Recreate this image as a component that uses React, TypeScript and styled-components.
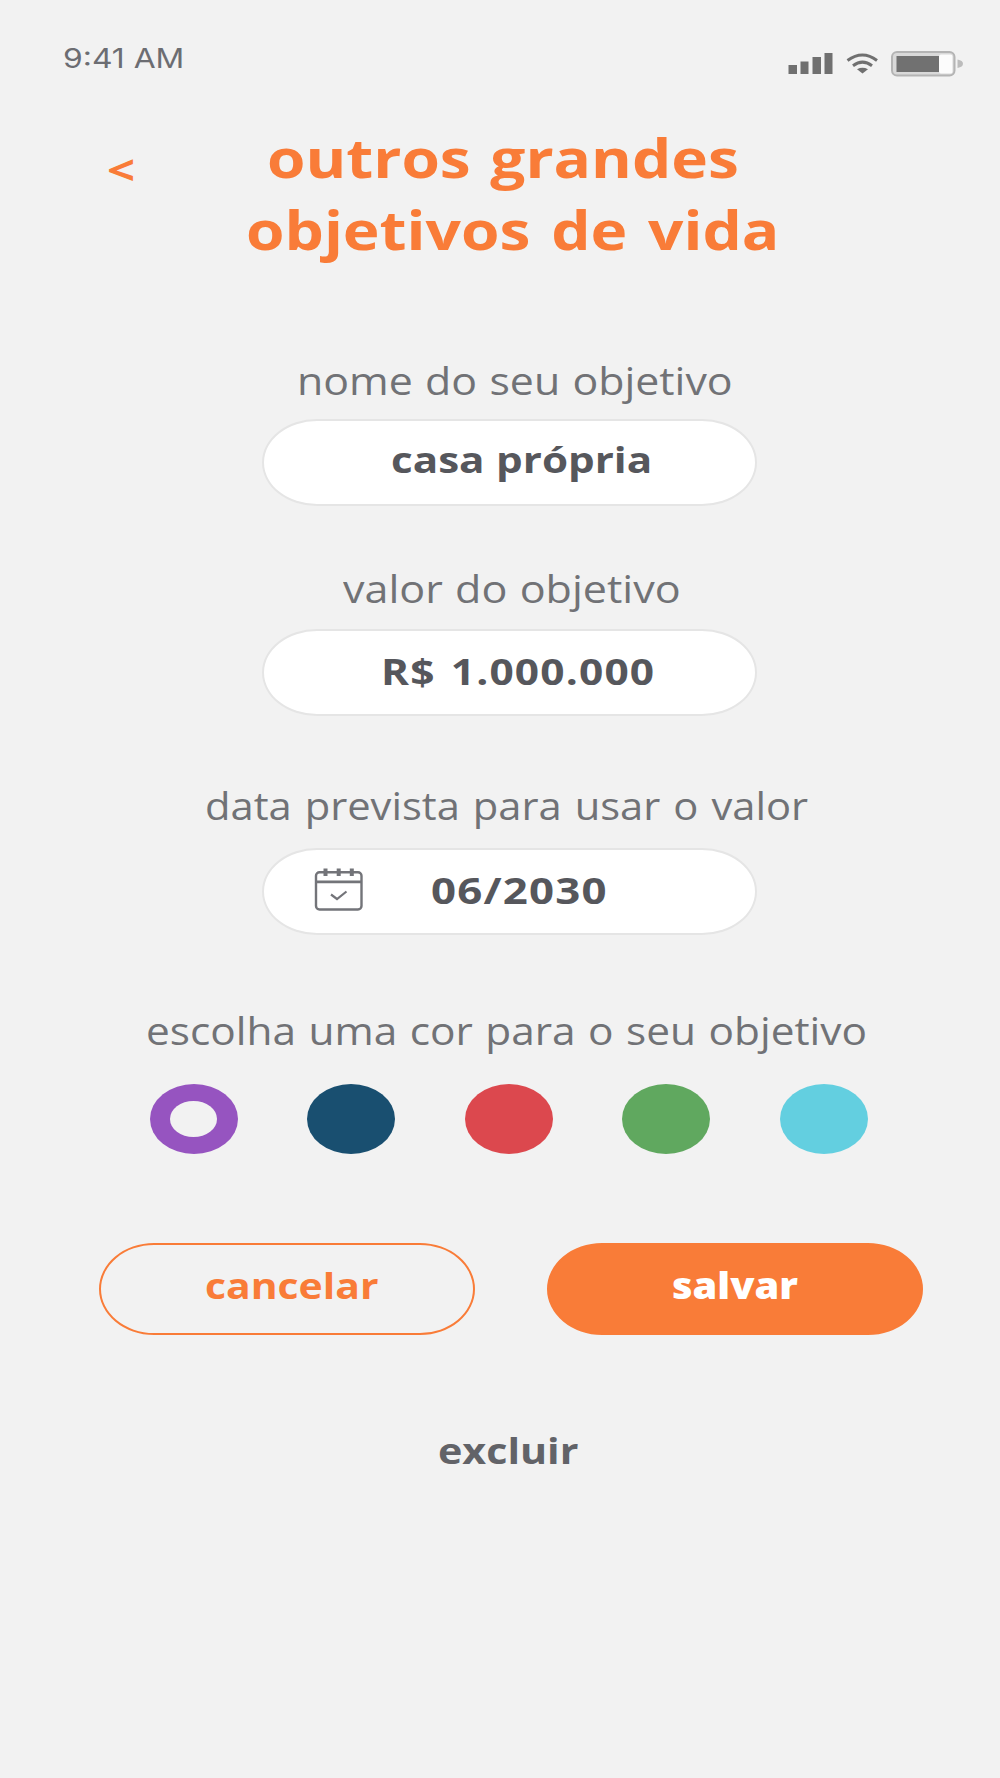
import React from "react";
import styled, { createGlobalStyle } from "styled-components";

const colors = {
  page: "#f2f2f2",
  orange: "#f97c38",
  label: "#717276",
  value: "#56575c",
};

const GlobalStyle = createGlobalStyle`
  * { box-sizing: border-box; }
  body { margin: 0; background: ${colors.page}; }
  button { padding: 0; margin: 0; background: none; border: 0; font: inherit; cursor: pointer; text-align: left; }
`;

const Screen = styled.main`
  width: 1000px;
  height: 1778px;
  overflow: hidden;
  display: flex;
  flex-direction: column;
  background: ${colors.page};
  font-family: "Open Sans", "Noto Sans", sans-serif;
`;

const StatusBar = styled.div`
  height: 121px;
  flex: none;
  display: flex;
  justify-content: space-between;
  padding: 42px 34px 0 63px;
`;

const Wide = styled.span<{ $scale: number; $letter?: number; $word?: number }>`
  display: inline-block;
  white-space: nowrap;
  letter-spacing: ${(p) => p.$letter ?? 0}px;
  word-spacing: ${(p) => p.$word ?? 0}px;
  transform: scaleX(${(p) => p.$scale});
  transform-origin: left center;
`;

const Clock = styled.div`
  font-family: Inter, sans-serif;
  font-size: 26.5px;
  line-height: 32px;
  color: #6c6d72;
`;

const Header = styled.header`
  height: 144px;
  flex: none;
  display: flex;
`;

const Back = styled.button`
  width: 138px;
  height: 96px;
  padding: 0 0 0 107px;
  && {
    font-size: 41px;
    font-weight: 700;
    line-height: 96px;
  }
  color: ${colors.orange};
`;

const Title = styled.h1`
  margin: 0;
  font-size: 54px;
  font-weight: 700;
  line-height: 72px;
  color: ${colors.orange};
`;

const TitleLine = styled.div<{ $indent: number }>`
  padding-left: ${(p) => p.$indent}px;
`;

const Field = styled.section<{ $top: number; $gap: number }>`
  margin-top: ${(p) => p.$top}px;
  display: flex;
  flex-direction: column;
  gap: ${(p) => p.$gap}px;
`;

const Label = styled.div<{ $left: number }>`
  height: 50px;
  padding-left: ${(p) => p.$left}px;
  font-size: 37.5px;
  line-height: 50px;
  color: ${colors.label};
`;

const Pill = styled.div<{ $text: number; $down: number }>`
  width: 495px;
  height: 87px;
  margin-left: 262px;
  padding: ${(p) => p.$down}px 0 0 ${(p) => p.$text}px;
  display: flex;
  border: 2px solid #e5e5e5;
  border-radius: 55px / 43.5px;
  background: #fff;
  font-size: 36.5px;
  font-weight: 700;
  line-height: 44px;
  color: ${colors.value};
`;

const CalendarIcon = styled.svg`
  width: 50px;
  height: 46px;
  margin: -2px 67px 0 0;
  flex: none;
`;

const Swatches = styled.div`
  display: flex;
  gap: 69.6px;
  padding-left: 149.5px;
`;

const Swatch = styled.button<{ $color: string; $selected?: boolean }>`
  width: 88px;
  height: 70px;
  display: grid;
  place-items: center;
  border-radius: 50%;
  background: ${(p) => p.$color};

  &::after {
    content: "";
    display: ${(p) => (p.$selected ? "block" : "none")};
    width: 47px;
    height: 36px;
    border-radius: 50%;
    background: ${colors.page};
  }
`;

const Actions = styled.div`
  display: flex;
  gap: 72px;
  margin-top: 89px;
  padding-left: 98.5px;
`;

const Action = styled.button<{ $filled?: boolean; $text: number }>`
  && {
    width: 376px;
    height: 92px;
    padding: 18px 0 0 ${(p) => p.$text}px;
    display: flex;
    border: 2px solid ${colors.orange};
    border-radius: 55px / 46px;
    background: ${(p) => (p.$filled ? colors.orange : "transparent")};
    color: ${(p) => (p.$filled ? "#fff" : colors.orange)};
    font-size: 36.5px;
    font-weight: ${(p) => (p.$filled ? 800 : 700)};
    line-height: 44px;
  }
`;

const Delete = styled.button`
  && {
    align-self: flex-start;
    margin: 93px 0 0 438px;
    font-size: 36.5px;
    font-weight: 700;
    line-height: 44px;
    color: #626368;
  }
`;

const swatches = ["#9654c0", "#194f70", "#dc484e", "#60a85f", "#63cfe0"];

function StatusIcons() {
  return (
    <svg width="180" height="40" viewBox="786 42 180 40" aria-hidden="true">
      <g fill="#707070">
        <rect x="788.5" y="65" width="8.5" height="9" />
        <rect x="800.5" y="61.5" width="8" height="12.5" />
        <rect x="812.5" y="57" width="8.5" height="17" />
        <rect x="824.5" y="53" width="8" height="21" />
      </g>
      <g fill="none" stroke="#707070" strokeWidth="3">
        <path d="M847.5 60.5Q862.5 49.5 877 60.5" />
        <path d="M853 65.7Q862.5 58.5 872 65.7" />
      </g>
      <path d="M857 69.2Q862.5 66.4 868 69.2L862.5 73.5Z" fill="#707070" />
      <rect x="892" y="52" width="62.5" height="23.5" rx="5" fill="#d9d9d9" stroke="#b4b4b4" strokeWidth="2" />
      <rect x="939" y="54.5" width="13.5" height="19" rx="2" fill="#fcfcfc" />
      <rect x="896.5" y="56" width="42.5" height="16" fill="#717171" />
      <path d="M957.5 59.5Q963 60.5 963 63.8Q963 67 957.5 68Z" fill="#bcbcbc" />
    </svg>
  );
}

function Calendar() {
  return (
    <CalendarIcon viewBox="314 866 50 46" fill="none" stroke="#737479" strokeWidth="2.4">
      <rect x="316" y="872.2" width="45.5" height="37.3" rx="3.5" />
      <path d="M316 881.8H361.5" strokeWidth="2.8" />
      <path d="M325.5 868.5V876M338.7 868.5V876M351.8 868.5V876" strokeWidth="4" />
      <path d="M331 894.5L337 899L346.5 891.5" strokeWidth="2.2" />
    </CalendarIcon>
  );
}

export default function App() {
  return (
    <Screen>
      <GlobalStyle />
      <StatusBar>
        <Clock><Wide $scale={1.2}>9:41 AM</Wide></Clock>
        <StatusIcons />
      </StatusBar>
      <Header>
        <Back aria-label="voltar"><Wide $scale={1.2}>&lt;</Wide></Back>
        <Title>
          <TitleLine $indent={129}><Wide $scale={1.15} $word={3}>outros grandes</Wide></TitleLine>
          <TitleLine $indent={107.5}><Wide $scale={1.152} $word={4}>objetivos de vida</Wide></TitleLine>
        </Title>
      </Header>
      <Field $top={91} $gap={13}>
        <Label $left={297}><Wide $scale={1.143} $word={1}>nome do seu objetivo</Wide></Label>
        <Pill $text={127} $down={16}><Wide $scale={1.155} $word={0.5}>casa própria</Wide></Pill>
      </Field>
      <Field $top={58} $gap={15}>
        <Label $left={343}><Wide $scale={1.148} $word={1}>valor do objetivo</Wide></Label>
        <Pill $text={117} $down={18}><Wide $scale={1.163} $letter={1} $word={2.5}>R$ 1.000.000</Wide></Pill>
      </Field>
      <Field $top={65} $gap={17}>
        <Label $left={205}><Wide $scale={1.111} $word={2}>data prevista para usar o valor</Wide></Label>
        <Pill $text={50} $down={18}>
          <Calendar />
          <Wide $scale={1.2} $letter={1}>06/2030</Wide>
        </Pill>
      </Field>
      <Field $top={71} $gap={28}>
        <Label $left={146}><Wide $scale={1.13} $word={1.3}>escolha uma cor para o seu objetivo</Wide></Label>
        <Swatches>
          {swatches.map((color, i) => (
            <Swatch key={color} $color={color} $selected={i === 0} />
          ))}
        </Swatches>
      </Field>
      <Actions>
        <Action $text={104}><Wide $scale={1.12}>cancelar</Wide></Action>
        <Action $filled $text={123}><Wide $scale={1.09}>salvar</Wide></Action>
      </Actions>
      <Delete><Wide $scale={1.13}>excluir</Wide></Delete>
    </Screen>
  );
}
